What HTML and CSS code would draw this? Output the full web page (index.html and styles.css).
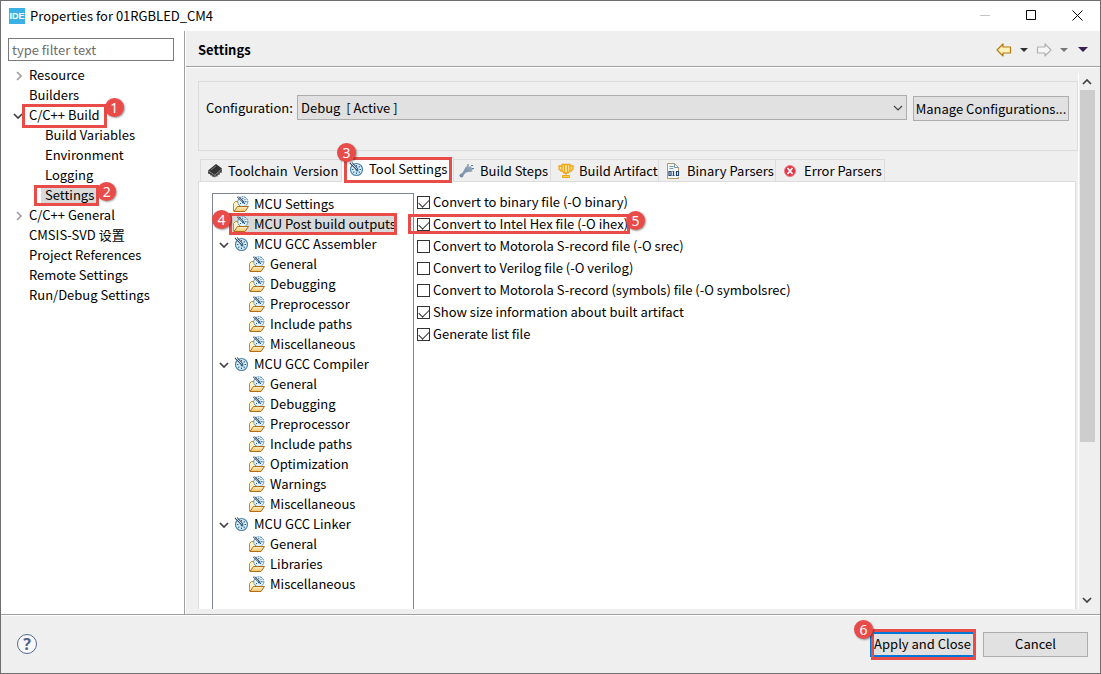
FILE: index.html
```html
<!DOCTYPE html>
<html lang="en">
<head>
<meta charset="utf-8">
<title>Properties for 01RGBLED_CM4</title>
<link rel="stylesheet" href="styles.css">
</head>
<body>
<svg class="sprite" aria-hidden="true">
  <defs>
    <linearGradient id="gold" x1="0" y1="0" x2="0" y2="1"><stop offset="0" stop-color="#fff3cf"/><stop offset="1" stop-color="#f3c160"/></linearGradient>
  </defs>
  <symbol id="dial" viewBox="0 0 16 16">
    <circle cx="8.500" cy="8.500" r="6" fill="#d9edf8" stroke="#4a86ae" stroke-width="1.200"/>
    <path d="M8.500 4v1.500M8.500 11.500V13M4 8.500h1.500M11.500 8.500H13M11.700 5.300l-1 1M5.300 11.700l1-1M11.700 11.700l-1-1" stroke="#285f88" stroke-width="1.200"/>
    <path d="M2 2l7 7M4 1.500l6 6.500" stroke="#405367" stroke-width="1.100"/>
    <path d="M3 2l6.500 6.500" stroke="#e3f2ff" stroke-width=".7"/>
    <circle cx="9" cy="9" r="1.500" fill="#306b9d"/>
  </symbol>
  <symbol id="folder" viewBox="0 0 16 16">
    <path d="M.5 15V7.500l2-2h3L7 7.500h5V14z" fill="#fff0c5" stroke="#c08c34"/>
    <circle cx="9.800" cy="5.700" r="5" fill="#e2f1fa" stroke="#4681ab" stroke-dasharray="2 .7"/>
    <path d="M9.800 2v1.300M13.500 5.700H12M12.300 3.200l-1 1M12 8l-1-1M7 8l1-1" stroke="#285f88"/>
    <path d="M4 .8l6 5.700M5.700.5L11 6" stroke="#34475c"/>
    <circle cx="10.200" cy="6.200" r="1.200" fill="#306b9d"/>
    <path d="M1 15.500l3.500-5h11l-3.500 5z" fill="url(#gold)" stroke="#ad6d1c"/>
  </symbol>
  <symbol id="down" viewBox="0 0 10 6"><path d="M1 1l4 4 4-4" fill="none" stroke="#404040" stroke-width="1.700"/></symbol>
  <symbol id="right" viewBox="0 0 6 10"><path d="M1 1l4 4-4 4" fill="none" stroke="#a0a0a0" stroke-width="1.700"/></symbol>
  <symbol id="arrow-left" viewBox="0 0 16 14"><path d="M1 7l6-6v3h7.500v6H7v3z" stroke-width="1.200" stroke-linejoin="round"/></symbol>
  <symbol id="arrow-right" viewBox="0 0 16 14"><path d="M15 7L9 1v3H1.500v6H9v3z" stroke-width="1.200" stroke-linejoin="round"/></symbol>
</svg>
<main class="dialog">
  <header class="titlebar">
    <span class="app-icon">IDE</span>
    <span class="title">Properties for 01RGBLED_CM4</span>
    <div class="window-controls">
      <button aria-label="Minimize" disabled><svg width="11" height="11"><path d="M0 5.500h10" stroke="#c4c4c4"/></svg></button>
      <button aria-label="Maximize"><svg width="11" height="11"><path d="M.5.500h9v9h-9z" fill="none" stroke="#000"/></svg></button>
      <button aria-label="Close"><svg width="11" height="11"><path d="M.5.500l10 10M10.500.500l-10 10" stroke="#000"/></svg></button>
    </div>
  </header>
  <div class="body">
    <nav class="sidebar">
      <input class="filter" type="text" placeholder="type filter text" aria-label="type filter text">
      <ul class="nav">
        <li><svg class="twist right"><use href="#right"/></svg><span>Resource</span></li>
        <li><span>Builders</span></li>
        <li><svg class="twist"><use href="#down"/></svg><span class="marked build">C/C++ Build<i class="frame"></i><b class="badge">1</b></span></li>
        <li class="child"><span>Build Variables</span></li>
        <li class="child"><span>Environment</span></li>
        <li class="child"><span>Logging</span></li>
        <li class="child"><span class="marked chosen">Settings<i class="frame"></i><b class="badge">2</b></span></li>
        <li><svg class="twist right"><use href="#right"/></svg><span>C/C++ General</span></li>
        <li><span>CMSIS-SVD 设置</span></li>
        <li><span>Project References</span></li>
        <li><span>Remote Settings</span></li>
        <li><span>Run/Debug Settings</span></li>
      </ul>
    </nav>
    <section class="page">
      <header class="page-head">
        <h1>Settings</h1>
        <div class="history">
          <button aria-label="Back"><svg class="back" width="16" height="14"><use href="#arrow-left"/></svg></button>
          <button class="caret" aria-label="Back history"></button>
          <button aria-label="Forward"><svg class="forward" width="16" height="14"><use href="#arrow-right"/></svg></button>
          <button class="caret dim" aria-label="Forward history"></button>
          <button class="caret menu" aria-label="Menu"></button>
        </div>
      </header>
      <div class="viewport">
        <div class="content">
          <div class="config">
            <label for="config">Configuration:</label>
            <div class="combo">
              <select id="config"><option>Debug&nbsp; [ Active ]</option></select>
              <svg width="10" height="6" viewBox="0 0 10 6"><path d="M1 1l4 4 4-4" fill="none" stroke="#444" stroke-width="1.200"/></svg>
            </div>
            <button class="push manage">Manage Configurations...</button>
          </div>
          <div class="tabs" role="tablist">
            <button class="tab toolchain" role="tab"><svg width="16" height="16"><path d="M1 7.500L9 1l6 4.500L8 12z" fill="#333"/><path d="M1 7.500L8 12v2.500L1 10zM8 12l7-6.500V8l-7 6.500z" fill="#666"/><path d="M2 9v2M4 10v2.500M6 11.500V14M10 11v2.500M12 9.500V12M14 7.500V10" stroke="#222"/><path d="M4 7l5-4" stroke="#777"/></svg>Toolchain&nbsp; Version</button>
            <button class="tab tools active" role="tab" aria-selected="true"><svg width="16" height="16"><use href="#dial"/></svg>Tool Settings<i class="frame"></i><b class="badge">3</b></button>
            <button class="tab steps" role="tab"><svg width="16" height="16"><path d="M4.500 8L7 3.500 11.500 8.500 7 9.500l-3 3-1.500-1.500z" fill="#8298ad"/><path d="M7 4l2-2 1 2 2-1 .5 2 2.500.5-2 1.500.5 1.500-3 .5z" fill="#8da2b5"/><circle cx="2.500" cy="12.500" r="2" fill="#7890a8"/><path d="M8 2h2M12 2.500h2M13 5.500h2" stroke="#607e98"/></svg>Build Steps</button>
            <button class="tab artifact" role="tab"><svg width="16" height="16"><path d="M4 1.500h8v6L10 10H6L4 7.500zM4 3H1v3l2 2h2M12 3h3v3l-2 2h-2" fill="#ffe08a" stroke="#eda51d" stroke-width="1.300"/><path d="M6.500 2v7M9.500 2v7M8 10v3M4.500 14.500h7v-2h-7z" fill="#ffce4d" stroke="#eda51d"/></svg>Build Artifact</button>
            <button class="tab binary" role="tab"><svg width="16" height="16"><path d="M1.500.500h7l4 4v11h-11z" fill="#f3f7fa" stroke="#b79a62"/><path d="M8.500.500v4h4M3.500 3.500h4M3.500 5.500h4" fill="none" stroke="#789ab3"/><path d="M2 8h12v6H2z" fill="#f3f7fa"/><path d="M3 8.500h2v4H3zM7.500 8v5M8.500 12.500h-2M7.500 8.500h-1M10.500 8.500h2v4h-2z" fill="none" stroke="#24456e" stroke-width="1.200"/></svg>Binary Parsers</button>
            <button class="tab errors" role="tab"><svg width="16" height="16"><circle cx="7" cy="8" r="5.500" fill="#df3445" stroke="#ee7d83"/><path d="M4.500 5l5 6M9.500 5l-5 6" stroke="#fff" stroke-width="1.700"/></svg>Error Parsers</button>
          </div>
          <div class="folder">
            <ul class="tools-tree">
              <li><svg class="ico"><use href="#folder"/></svg>MCU Settings</li>
              <li class="marked post"><svg class="ico"><use href="#folder"/></svg>MCU Post build outputs<i class="frame"></i><b class="badge">4</b></li>
              <li><svg class="twist"><use href="#down"/></svg><svg class="ico"><use href="#dial"/></svg>MCU GCC Assembler</li>
              <li class="child"><svg class="ico"><use href="#folder"/></svg>General</li>
              <li class="child"><svg class="ico"><use href="#folder"/></svg>Debugging</li>
              <li class="child"><svg class="ico"><use href="#folder"/></svg>Preprocessor</li>
              <li class="child"><svg class="ico"><use href="#folder"/></svg>Include paths</li>
              <li class="child"><svg class="ico"><use href="#folder"/></svg>Miscellaneous</li>
              <li><svg class="twist"><use href="#down"/></svg><svg class="ico"><use href="#dial"/></svg>MCU GCC Compiler</li>
              <li class="child"><svg class="ico"><use href="#folder"/></svg>General</li>
              <li class="child"><svg class="ico"><use href="#folder"/></svg>Debugging</li>
              <li class="child"><svg class="ico"><use href="#folder"/></svg>Preprocessor</li>
              <li class="child"><svg class="ico"><use href="#folder"/></svg>Include paths</li>
              <li class="child"><svg class="ico"><use href="#folder"/></svg>Optimization</li>
              <li class="child"><svg class="ico"><use href="#folder"/></svg>Warnings</li>
              <li class="child"><svg class="ico"><use href="#folder"/></svg>Miscellaneous</li>
              <li><svg class="twist"><use href="#down"/></svg><svg class="ico"><use href="#dial"/></svg>MCU GCC Linker</li>
              <li class="child"><svg class="ico"><use href="#folder"/></svg>General</li>
              <li class="child"><svg class="ico"><use href="#folder"/></svg>Libraries</li>
              <li class="child"><svg class="ico"><use href="#folder"/></svg>Miscellaneous</li>
            </ul>
            <div class="options">
              <label><input type="checkbox" checked>Convert to binary file (-O binary)</label>
              <label class="marked hex"><input type="checkbox" checked>Convert to Intel Hex file (-O ihex)<i class="frame"></i><b class="badge">5</b></label>
              <label><input type="checkbox">Convert to Motorola S-record file (-O srec)</label>
              <label><input type="checkbox">Convert to Verilog file (-O verilog)</label>
              <label><input type="checkbox">Convert to Motorola S-record (symbols) file (-O symbolsrec)</label>
              <label><input type="checkbox" checked>Show size information about built artifact</label>
              <label><input type="checkbox" checked>Generate list file</label>
            </div>
          </div>
        </div>
        <div class="scrollbar">
          <svg class="up" width="10" height="6"><use href="#down"/></svg>
          <div class="track"><div class="thumb"></div></div>
          <svg width="10" height="6"><use href="#down"/></svg>
        </div>
      </div>
    </section>
  </div>
  <footer class="footer">
    <button class="help" aria-label="Help">?</button>
    <div class="marked apply"><button class="push default">Apply and Close</button><i class="frame"></i><b class="badge">6</b></div>
    <button class="push cancel">Cancel</button>
  </footer>
</main>
</body>
</html>
```
FILE: styles.css
```css
* { box-sizing: border-box; }
body {
  margin: 0;
  font: 13px/20px "Noto Sans CJK SC", "Noto Sans", sans-serif;
  color: #000;
}
button, input, select { font: inherit; color: inherit; }
button { padding: 0; border: 0; background: none; }
ul { margin: 0; padding: 0; list-style: none; }
svg { flex: none; }
.sprite { position: absolute; width: 0; height: 0; }

.dialog {
  display: flex;
  flex-direction: column;
  height: 100vh;
  border: 1px solid #6e6e6e;
  background: #efefef;
  overflow: hidden;
  white-space: nowrap;
}

/* Title bar */
.titlebar {
  display: flex;
  align-items: center;
  flex: none;
  height: 30px;
  padding: 0 17px 1px 8px;
  background: #fff;
}
.app-icon {
  width: 16px;
  height: 16px;
  margin-right: 5px;
  background: #3ab0e5;
  color: #fff;
  font: bold 9px/16px "Liberation Sans", sans-serif;
  text-align: center;
}
.window-controls { display: flex; gap: 35px; margin-left: auto; }
.window-controls button { display: flex; }

.body { display: flex; flex: 1; min-height: 0; }

/* Left navigation */
.sidebar {
  flex: none;
  width: 184px;
  padding: 7px 10px 0 7px;
  border-right: 1px solid #a0a0a0;
  background: #fff;
}
.filter {
  display: block;
  width: 100%;
  height: 23px;
  padding: 0 3px 1px;
  border: 1px solid #7a7a7a;
  background: #fff;
}
.filter::placeholder { color: #6d6d6d; opacity: 1; }
.nav { padding-top: 4px; }
.nav li { position: relative; height: 20px; padding-left: 21px; }
.nav .child { padding-left: 37px; }
.twist { position: absolute; left: 5px; top: 8px; width: 10px; height: 6px; }
.twist.right { left: 8px; top: 6px; width: 6px; height: 10px; }

/* Numbered callouts */
.marked { position: relative; }
.frame {
  position: absolute;
  border: 3px solid #e94b49;
  pointer-events: none;
}
.badge {
  position: absolute;
  z-index: 2;
  width: 19px;
  height: 19px;
  border-radius: 50%;
  background: #e94b49;
  box-shadow: 1px 1px 2px #0006;
  color: #fff;
  font: 14px/19px "Noto Sans", sans-serif;
  text-align: center;
}
.build .frame { inset: -1px -7px -4px -7px; }
.build .badge { right: -24px; top: -7px; }
.chosen { display: inline-block; height: 18px; padding: 0 4px; margin-left: -4px; line-height: 20px; background: #d9d9d9; }
.chosen .frame { inset: 0 -1px -3px -7px; }
.chosen .badge { right: -18px; top: -3px; }

/* Page header */
.page { display: flex; flex-direction: column; flex: 1; min-width: 0; border-left: 1px solid #fff; }
.page-head {
  display: flex;
  align-items: center;
  flex: none;
  height: 36px;
  padding: 2px 12px 0;
  border-bottom: 1px solid #a0a0a0;
  box-shadow: 0 1px #fff;
}
h1 { margin: 0; font-size: 13px; }
.history { display: flex; align-items: center; gap: 8px; margin-left: auto; }
.history button { display: flex; }
.back { fill: #fff1bd; stroke: #b87a0c; }
.forward { fill: #f7f7f7; stroke: #b0b0b0; }
.caret { border: 4px solid transparent; border-top-color: #303030; border-bottom: 0; }
.caret.dim { border-top-color: #777; }
.caret.menu { margin-left: 2px; border-width: 5px 5px 0; border-top-color: #37204f; }

/* Scrolled content */
.viewport { display: flex; flex: 1; min-height: 0; padding: 6px 5px 5px 12px; }
.content { display: flex; flex-direction: column; flex: 1; min-width: 0; padding-top: 8px; }
.config {
  display: flex;
  align-items: flex-start;
  flex: none;
  height: 70px;
  padding: 13px 8px 0 7px;
  border: 1px solid #dcdcdc;
}
.config label { width: 91px; padding-top: 3px; }
.combo { position: relative; flex: 1; }
.combo select {
  display: block;
  width: 100%;
  height: 25px;
  padding: 0 3px;
  border: 1px solid #adadad;
  border-radius: 0;
  background: #e1e1e1;
  appearance: none;
}
.combo svg { position: absolute; right: 4px; top: 10px; }
.push { height: 25px; border: 1px solid #adadad; background: #e1e1e1; }
.manage { width: 156px; margin: 1px 0 0 6px; }

.tabs { display: flex; align-items: flex-end; flex: none; height: 30px; padding: 0 2px; }
.tab {
  display: flex;
  align-items: center;
  gap: 5px;
  height: 22px;
  padding-left: 6px;
  border: 1px solid #dcdcdc;
  border-width: 1px 1px 0 0;
}
.tab.toolchain { width: 142px; border-left-width: 1px; padding-left: 6px; }
.tab.tools {
  position: relative;
  width: 112px;
  height: 25px;
  margin-bottom: -1px;
  padding-bottom: 2px;
  background: #fff;
}
.tab.steps { width: 97px; padding-left: 5px; }
.tab.artifact { width: 108px; padding-left: 7px; }
.tab.binary { width: 117px; padding-left: 7px; }
.tab.errors { width: 109px; padding-left: 7px; }
.tools .frame { inset: -1px 1px -1px 2px; }
.tools .badge { left: -5px; top: -15px; }

.folder {
  display: flex;
  flex: 1;
  min-height: 0;
  margin-right: 2px;
  padding: 9px 0 0 13px;
  border: 1px solid #dcdcdc;
  border-bottom: 0;
  background: #fff;
}
.tools-tree {
  flex: none;
  width: 202px;
  margin-top: 2px;
  border: 1px solid #7f8590;
  border-bottom: 0;
}
.tools-tree li { position: relative; display: flex; align-items: center; gap: 5px; height: 20px; padding-left: 20px; }
.tools-tree .child { padding-left: 36px; }
.tools-tree .twist { left: 6px; }
.ico { width: 16px; height: 16px; }
.post { margin: 0 18px; background: #d9d9d9; }
.tools-tree .post { padding-left: 2px; }
.post .frame { inset: -1px -2px -1px -2px; }
.post .badge { left: -19px; top: -4px; }

.options { display: flex; flex-direction: column; align-items: flex-start; padding-left: 3px; }
.options label { display: flex; align-items: center; gap: 3px; height: 22px; }
.options input {
  width: 13px;
  height: 13px;
  margin: 0;
  border: 1px solid #333;
  background: #fff;
  appearance: none;
}
.options input:checked::before {
  content: "";
  display: block;
  width: 9px;
  height: 5px;
  margin: 2px 1px;
  border: solid #333;
  border-width: 0 0 1px 1px;
  transform: rotate(-45deg);
}
.options .hex .frame { inset: 1px -2px 1px -9px; }
.hex .badge { right: -17px; top: -2px; }

.scrollbar {
  display: flex;
  flex-direction: column;
  align-items: center;
  flex: none;
  width: 17px;
  padding: 6px 0;
  border-left: 1px solid #fff;
}
.up { transform: rotate(180deg); }
.track { flex: 1; width: 15px; padding: 5px 0 4px; }
.thumb { height: 70%; background: #cdcdcd; }

/* Footer */
.footer {
  display: flex;
  align-items: center;
  flex: none;
  height: 59px;
  border-top: 1px solid #a0a0a0;
  padding: 0 12px 0 16px;
  box-shadow: inset 0 1px #fff;
}
.help {
  width: 20px;
  height: 20px;
  margin-right: auto;
  border: 1px solid #57698c;
  border-radius: 50%;
  background: #f8f8f8;
  color: #50648c;
  font: bold 16px/18px "Noto Sans", sans-serif;
}
.footer .push { width: 105px; }
.footer .default { display: block; border: 2px solid #0078d7; }
.apply { margin-right: 8px; }
.apply .frame { inset: -3px -1px -3px 1px; }
.apply .badge { left: -16px; top: -12px; }
```
